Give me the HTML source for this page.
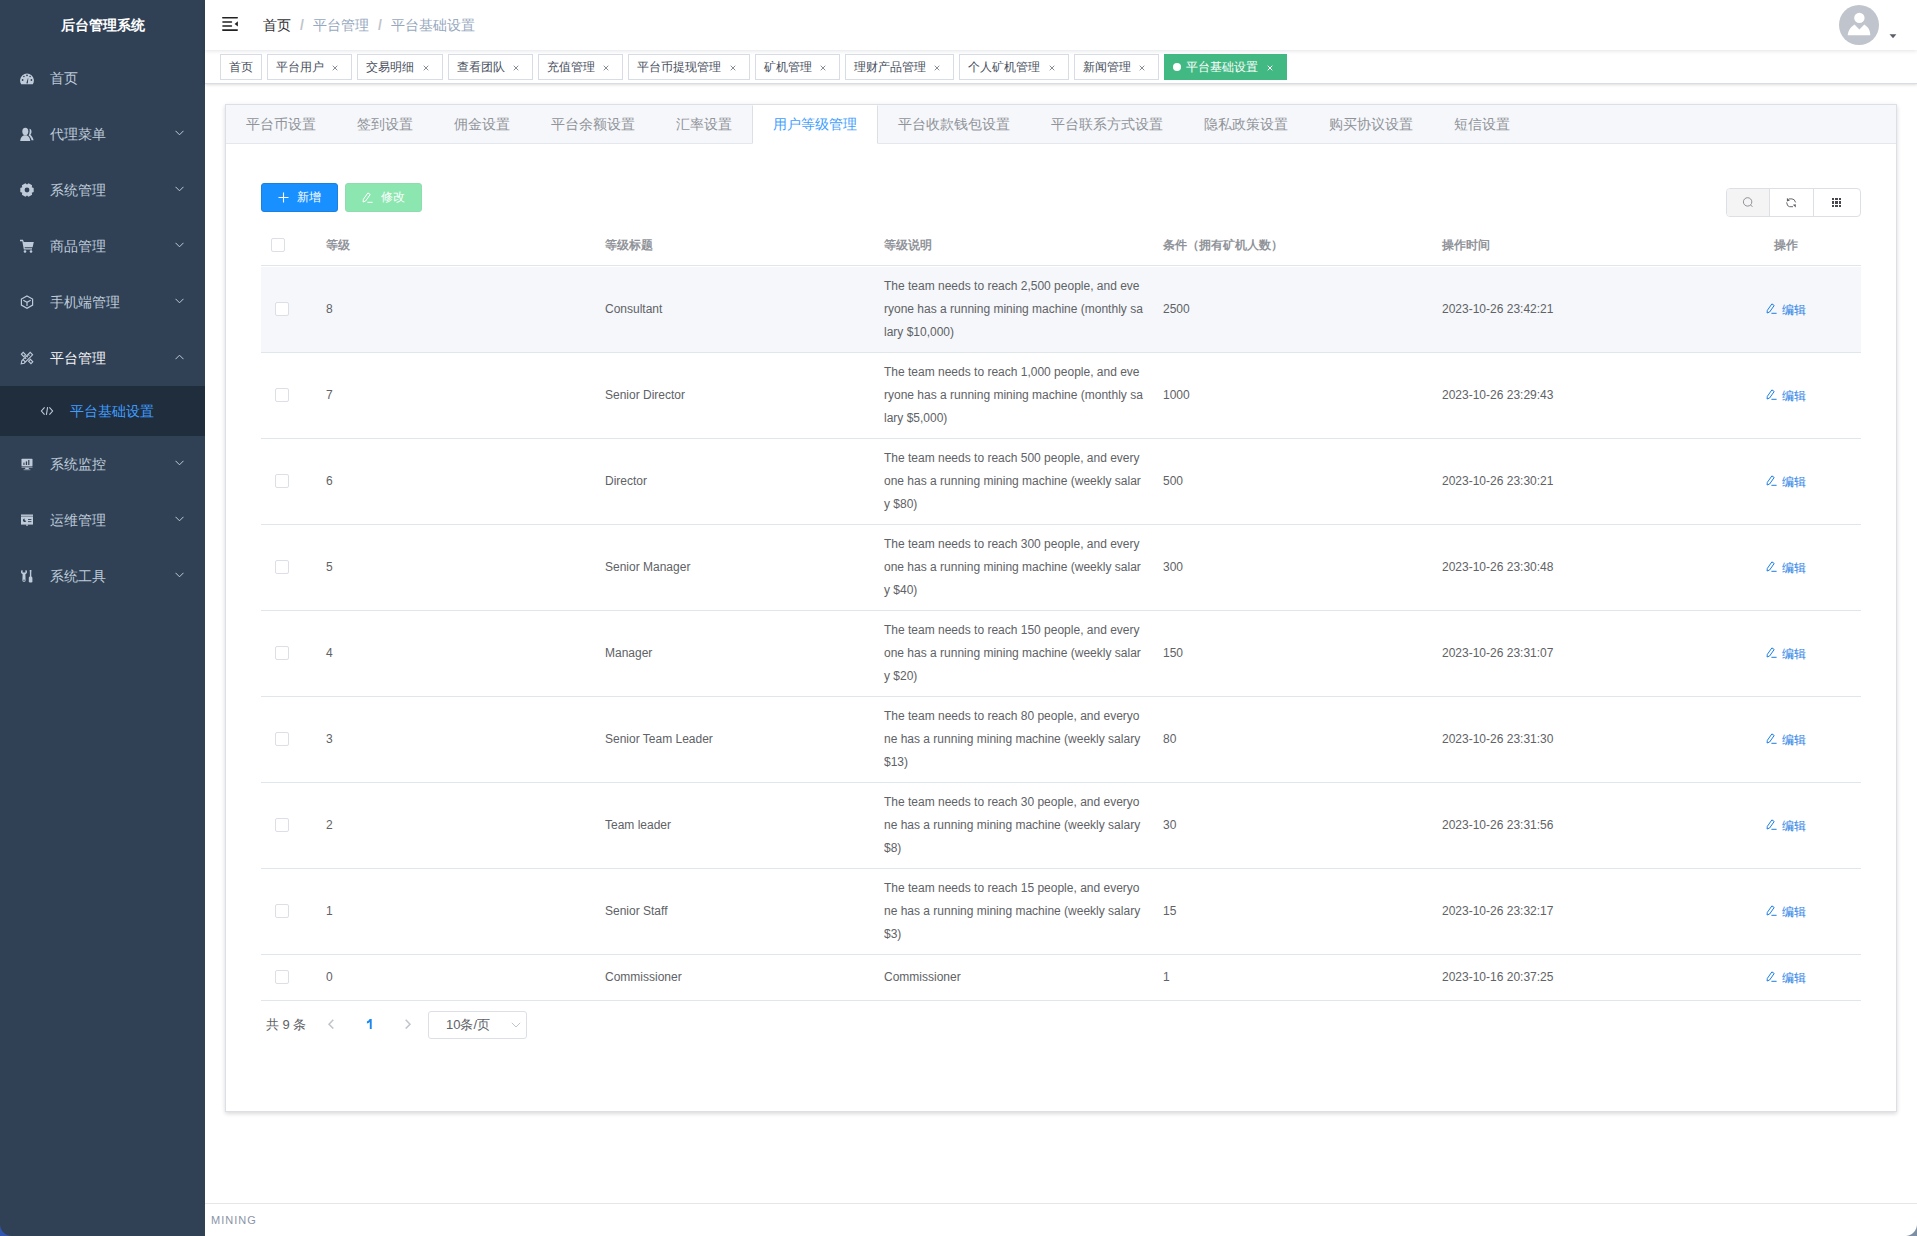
<!DOCTYPE html>
<html><head><meta charset="utf-8">
<style>
*{box-sizing:border-box;margin:0;padding:0}
html,body{width:1917px;height:1236px;overflow:hidden;background:#fff;font-family:"Liberation Sans",sans-serif;-webkit-font-smoothing:antialiased}
.abs{position:absolute}
#sidebar{position:absolute;left:0;top:0;width:205px;height:1236px;background:#304156}
#logo{position:absolute;left:0;top:0;width:205px;height:50px;line-height:50px;text-align:center;color:#fff;font-weight:bold;font-size:14px}
.mi{position:absolute;left:0;width:205px;height:56px;line-height:56px;color:#bfcbd9;font-size:14px}
.mi .ic{position:absolute;left:20px;top:21px;width:14px;height:14px}
.mi .tx{position:absolute;left:50px;top:0}
.mi .ch{position:absolute;left:175px;top:24px;width:9px;height:6px}
#navbar{position:absolute;z-index:3;left:205px;top:0;width:1712px;height:50px;background:#fff;box-shadow:0 1px 4px rgba(0,21,41,.12)}
#tags{position:absolute;left:205px;top:50px;width:1712px;height:34px;background:#fff;border-bottom:1px solid #d8dce5;box-shadow:0 1px 3px 0 rgba(0,0,0,.12),0 0 3px 0 rgba(0,0,0,.04)}
.tag{position:absolute;top:4px;height:26px;line-height:24px;border:1px solid #d8dce5;color:#495060;background:#fff;font-size:12px;padding:0 8px;white-space:nowrap}
.tag .x{position:absolute;right:8px;top:5px;width:16px;height:16px}
.tag.act{background:#42b983;border-color:#42b983;color:#fff}
.tag .dot{display:inline-block;width:8px;height:8px;border-radius:50%;background:#fff;margin-right:5.33px;vertical-align:0}
#card{position:absolute;left:225px;top:104px;width:1672px;height:1008px;background:#fff;border:1px solid #dcdfe6;box-shadow:0 2px 4px 0 rgba(0,0,0,.12),0 0 6px 0 rgba(0,0,0,.04)}
#tabhead{position:absolute;left:0;top:0;width:1670px;height:39px;background:#f5f7fa;border-bottom:1px solid #e4e7ed}
.tab{position:absolute;top:0;height:39px;line-height:37px;font-size:14px;color:#909399;padding:0 20px;border:1px solid transparent;white-space:nowrap}
.tab.act{color:#409eff;background:#fff;border-left-color:#dcdfe6;border-right-color:#dcdfe6}
.btn{position:absolute;height:29px;border:1px solid;border-radius:3px;color:#fff;font-size:12px;line-height:27px}
.cb{position:absolute;width:14px;height:14px;border:1px solid #dcdfe6;border-radius:2px;background:#fff}
.row{position:absolute;width:1600px;border-bottom:1px solid #dfe6ec;font-size:12px;color:#606266;line-height:23px}
.edit{color:#1c7ee6;width:60px;height:28px;line-height:28px}
#footer{position:absolute;left:205px;top:1203px;width:1712px;height:33px;border-top:1px solid #e6e6e6;background:#fff}
</style></head><body>
<div id="sidebar">
  <div id="logo">后台管理系统</div>
<div class="mi" style="top:50px"><svg class="ic" viewBox="0 0 14 14"><path d="M1.2 13.2 A6.9 6.9 0 1 1 12.8 13.2 Z" fill="#bfcbd9"/><circle cx="7" cy="4.3" r="0.9" fill="#304156"/><circle cx="3.9" cy="5.5" r="0.8" fill="#304156"/><circle cx="10.1" cy="5.5" r="0.8" fill="#304156"/><circle cx="2.6" cy="9" r="0.9" fill="#304156"/><circle cx="11.4" cy="9" r="0.9" fill="#304156"/><path d="M6.3 12.3 L7.9 7.2 L8.3 7.3 L7.8 12.5 Z" fill="#304156"/></svg><span class="tx">首页</span></div>
<div class="mi" style="top:106px"><svg class="ic" viewBox="0 0 14 14"><path d="M9.5 1.8 C11.8 2.3 12.3 5.7 10.4 7.8 C11.8 9 12.8 10.5 13.6 13.2 L11.6 13.2 C11 11 10 9.4 8.6 8.4 C9.8 6.6 9.9 3.4 9.5 1.8Z" fill="#bfcbd9"/><ellipse cx="5.3" cy="4.4" rx="3" ry="3.6" fill="#bfcbd9"/><path d="M0.2 14 C0.4 10.5 2.3 8.8 4 8.2 L6.6 8.2 C8.3 8.8 10 10.5 10.3 14 Z" fill="#bfcbd9"/></svg><span class="tx">代理菜单</span><svg class="ch" viewBox="0 0 9 6"><path d="M0.5 0.8 L4.5 4.8 L8.5 0.8" fill="none" stroke="#bfcbd9" stroke-width="1"/></svg></div>
<div class="mi" style="top:162px"><svg class="ic" viewBox="0 0 14 14"><path d="M11.76 4.25 L13.69 4.95 L13.69 9.05 L11.76 9.75 L12.12 11.77 L8.57 13.82 L7.00 12.50 L5.43 13.82 L1.88 11.77 L2.24 9.75 L0.31 9.05 L0.31 4.95 L2.24 4.25 L1.88 2.23 L5.43 0.18 L7.00 1.50 L8.57 0.18 L12.12 2.23 Z" fill="#bfcbd9"/><circle cx="7" cy="7" r="2.4" fill="#304156"/></svg><span class="tx">系统管理</span><svg class="ch" viewBox="0 0 9 6"><path d="M0.5 0.8 L4.5 4.8 L8.5 0.8" fill="none" stroke="#bfcbd9" stroke-width="1"/></svg></div>
<div class="mi" style="top:218px"><svg class="ic" viewBox="0 0 14 14"><path d="M0 0.8 L3 0.8 L3.8 3 L13.8 3 L12.6 8.2 L4.6 8.2 L4.8 9.2 L12 9.2 L12 10.4 L3.8 10.4 L2.3 2.2 L0 2.2 Z" fill="#bfcbd9"/><circle cx="5" cy="12.5" r="1.3" fill="#bfcbd9"/><circle cx="11" cy="12.5" r="1.3" fill="#bfcbd9"/></svg><span class="tx">商品管理</span><svg class="ch" viewBox="0 0 9 6"><path d="M0.5 0.8 L4.5 4.8 L8.5 0.8" fill="none" stroke="#bfcbd9" stroke-width="1"/></svg></div>
<div class="mi" style="top:274px"><svg class="ic" viewBox="0 0 14 14"><path d="M7 0.9 L12.6 4.1 L12.6 10.1 L7 13.3 L1.4 10.1 L1.4 4.1 Z" fill="none" stroke="#bfcbd9" stroke-width="1.2"/><path d="M3.3 5.2 L7 7.3 L10.7 5.2 M7 7.3 L7 11" fill="none" stroke="#bfcbd9" stroke-width="1.2"/></svg><span class="tx">手机端管理</span><svg class="ch" viewBox="0 0 9 6"><path d="M0.5 0.8 L4.5 4.8 L8.5 0.8" fill="none" stroke="#bfcbd9" stroke-width="1"/></svg></div>
<div class="mi" style="top:330px"><svg class="ic" viewBox="0 0 14 14"><g fill="none" stroke="#bfcbd9" stroke-width="1.1"><path d="M1.2 12.8 L1.8 9.8 L10.2 1.4 L12.6 3.8 L4.2 12.2 Z"/><path d="M3 8.6 L5.4 11 M5 6.6 L6.2 7.8 M6.6 5 L7.8 6.2 M8.2 3.4 L9.4 4.6"/><path d="M1.4 3.2 L3.2 1.4 L5.6 3.8 L3.8 5.6 Z M8.6 10.2 L10.4 8.4 L12.8 10.8 L11 12.6 Z"/></g></svg><span class="tx" style="color:#f4f4f5">平台管理</span><svg class="ch" viewBox="0 0 9 6"><path d="M0.5 5.2 L4.5 1.2 L8.5 5.2" fill="none" stroke="#bfcbd9" stroke-width="1"/></svg></div>
<div class="mi" style="top:386px;height:50px;line-height:50px;background:#1f2d3d"><svg class="ic" style="left:40px;top:18px" viewBox="0 0 14 14"><path d="M4.6 3.4 L1.4 7 L4.6 10.6 M9.4 3.4 L12.6 7 L9.4 10.6 M7.6 3.2 L6.4 10.8" fill="none" stroke="#bfcbd9" stroke-width="1.1"/></svg><span class="tx" style="left:70px;color:#409eff">平台基础设置</span></div>
<div class="mi" style="top:436px"><svg class="ic" viewBox="0 0 14 14"><rect x="1.5" y="1.8" width="11" height="7.4" rx="0.6" fill="#bfcbd9"/><rect x="1.5" y="9.6" width="11" height="1.2" fill="#8f9bab"/><rect x="5.2" y="10.8" width="3.6" height="1.6" fill="#bfcbd9"/><rect x="3.6" y="12.3" width="6.8" height="0.9" fill="#8f9bab"/><rect x="3.4" y="5.6" width="1.1" height="2.4" fill="#304156"/><rect x="5.8" y="4.4" width="1.3" height="3.6" fill="#304156"/><rect x="8.2" y="3" width="1.2" height="5" fill="#304156"/></svg><span class="tx">系统监控</span><svg class="ch" viewBox="0 0 9 6"><path d="M0.5 0.8 L4.5 4.8 L8.5 0.8" fill="none" stroke="#bfcbd9" stroke-width="1"/></svg></div>
<div class="mi" style="top:492px"><svg class="ic" viewBox="0 0 14 14"><rect x="1" y="1.5" width="12" height="1.4" fill="#bfcbd9"/><rect x="1" y="3.4" width="12" height="8.2" fill="#bfcbd9"/><rect x="6.2" y="11.4" width="1.6" height="1.4" fill="#bfcbd9"/><path d="M4.6 5.4 A1.8 1.8 0 1 0 6.3 8 L4.6 7.2 Z" fill="#304156"/><rect x="8" y="6" width="3.4" height="0.9" fill="#304156"/><rect x="8" y="8.2" width="3.4" height="0.9" fill="#304156"/></svg><span class="tx">运维管理</span><svg class="ch" viewBox="0 0 9 6"><path d="M0.5 0.8 L4.5 4.8 L8.5 0.8" fill="none" stroke="#bfcbd9" stroke-width="1"/></svg></div>
<div class="mi" style="top:548px"><svg class="ic" viewBox="0 0 14 14"><path d="M1.4 1.2 C0.6 3 1 4.6 2.6 5.2 L2.4 11.2 C2.4 13.4 5.6 13.4 5.6 11.2 L5.4 5.2 C7 4.6 7.4 3 6.6 1.2 L5.4 1.2 L5.4 3.4 L2.6 3.4 L2.6 1.2 Z" fill="#bfcbd9"/><circle cx="4" cy="11.2" r="0.7" fill="#304156"/><path d="M10.2 0.9 C9.5 1 9.4 2 9.9 2.6 L9.9 7.6 C9 8 8.8 8.6 8.8 9.5 L8.8 12.6 C8.8 13.2 9.2 13.4 9.6 13.4 L11.6 13.4 C12 13.4 12.4 13.2 12.4 12.6 L12.4 9.5 C12.4 8.6 12.2 8 11.3 7.6 L11.3 2.6 C11.8 2 11.7 1 11 0.9 Z" fill="#bfcbd9"/></svg><span class="tx">系统工具</span><svg class="ch" viewBox="0 0 9 6"><path d="M0.5 0.8 L4.5 4.8 L8.5 0.8" fill="none" stroke="#bfcbd9" stroke-width="1"/></svg></div>
</div>
<div id="navbar">
  <svg class="abs" style="left:17px;top:10px" width="20" height="30" viewBox="0 0 20 30"><g fill="#222"><rect x="0" y="7" width="16" height="1.6" rx="0.8"/><rect x="0.2" y="11.2" width="10" height="1.5" rx="0.7"/><rect x="0.2" y="15.2" width="10" height="1.5" rx="0.7"/><rect x="0" y="19.3" width="16" height="1.6" rx="0.8"/><path d="M15.9 11.3 L15.9 16.6 L12.6 14 Z"/></g></svg>
  <div class="abs" style="left:58px;top:0;height:50px;line-height:50px;font-size:14px;white-space:nowrap"><span style="color:#303133">首页</span><span style="color:#c0c4cc;font-weight:bold;margin:0 9px">/</span><span style="color:#97a8be">平台管理</span><span style="color:#c0c4cc;font-weight:bold;margin:0 9px">/</span><span style="color:#97a8be">平台基础设置</span></div>
  <svg class="abs" style="left:1634px;top:5px" width="40" height="40" viewBox="0 0 40 40"><circle cx="20" cy="20" r="20" fill="#c0c4cc"/><circle cx="20.4" cy="12.9" r="5.2" fill="#fff"/><path d="M8.7 30.3 C9.2 25 12 21.6 15.5 19.4 L20.4 24.6 L25.3 19.4 C28.8 21.6 31.4 25 31.3 30.3 Z" fill="#fff"/></svg>
  <svg class="abs" style="left:1684px;top:34px" width="8" height="5" viewBox="0 0 8 5"><path d="M0.5 0.2 L7.4 0.2 L4 4.2 Z" fill="#5a5e66"/></svg>
</div>
<div id="tags">
<div class="tag" style="left:15.00px;width:42.00px">首页</div>
<div class="tag" style="left:62.00px;width:85.33px">平台用户<svg class="x" width="16" height="16" viewBox="0 0 16 16"><path d="M5.7 5.7 L10.3 10.3 M10.3 5.7 L5.7 10.3" stroke="#7a808c" stroke-width="0.9"/></svg></div>
<div class="tag" style="left:152.33px;width:85.33px">交易明细<svg class="x" width="16" height="16" viewBox="0 0 16 16"><path d="M5.7 5.7 L10.3 10.3 M10.3 5.7 L5.7 10.3" stroke="#7a808c" stroke-width="0.9"/></svg></div>
<div class="tag" style="left:242.66px;width:85.33px">查看团队<svg class="x" width="16" height="16" viewBox="0 0 16 16"><path d="M5.7 5.7 L10.3 10.3 M10.3 5.7 L5.7 10.3" stroke="#7a808c" stroke-width="0.9"/></svg></div>
<div class="tag" style="left:332.99px;width:85.33px">充值管理<svg class="x" width="16" height="16" viewBox="0 0 16 16"><path d="M5.7 5.7 L10.3 10.3 M10.3 5.7 L5.7 10.3" stroke="#7a808c" stroke-width="0.9"/></svg></div>
<div class="tag" style="left:423.32px;width:121.33px">平台币提现管理<svg class="x" width="16" height="16" viewBox="0 0 16 16"><path d="M5.7 5.7 L10.3 10.3 M10.3 5.7 L5.7 10.3" stroke="#7a808c" stroke-width="0.9"/></svg></div>
<div class="tag" style="left:549.65px;width:85.33px">矿机管理<svg class="x" width="16" height="16" viewBox="0 0 16 16"><path d="M5.7 5.7 L10.3 10.3 M10.3 5.7 L5.7 10.3" stroke="#7a808c" stroke-width="0.9"/></svg></div>
<div class="tag" style="left:639.98px;width:109.33px">理财产品管理<svg class="x" width="16" height="16" viewBox="0 0 16 16"><path d="M5.7 5.7 L10.3 10.3 M10.3 5.7 L5.7 10.3" stroke="#7a808c" stroke-width="0.9"/></svg></div>
<div class="tag" style="left:754.31px;width:109.33px">个人矿机管理<svg class="x" width="16" height="16" viewBox="0 0 16 16"><path d="M5.7 5.7 L10.3 10.3 M10.3 5.7 L5.7 10.3" stroke="#7a808c" stroke-width="0.9"/></svg></div>
<div class="tag" style="left:868.64px;width:85.33px">新闻管理<svg class="x" width="16" height="16" viewBox="0 0 16 16"><path d="M5.7 5.7 L10.3 10.3 M10.3 5.7 L5.7 10.3" stroke="#7a808c" stroke-width="0.9"/></svg></div>
<div class="tag act" style="left:958.97px;width:122.66px"><i class="dot"></i>平台基础设置<svg class="x" width="16" height="16" viewBox="0 0 16 16"><path d="M5.7 5.7 L10.3 10.3 M10.3 5.7 L5.7 10.3" stroke="#fff" stroke-width="1"/></svg></div>
</div>
<div id="card">
  <div id="tabhead">
<div class="tab" style="left:-1px;width:112px">平台币设置</div>
<div class="tab" style="left:110px;width:98px">签到设置</div>
<div class="tab" style="left:207px;width:98px">佣金设置</div>
<div class="tab" style="left:304px;width:126px">平台余额设置</div>
<div class="tab" style="left:429px;width:98px">汇率设置</div>
<div class="tab act" style="left:526px;width:126px">用户等级管理</div>
<div class="tab" style="left:651px;width:154px">平台收款钱包设置</div>
<div class="tab" style="left:804px;width:154px">平台联系方式设置</div>
<div class="tab" style="left:957px;width:126px">隐私政策设置</div>
<div class="tab" style="left:1082px;width:126px">购买协议设置</div>
<div class="tab" style="left:1207px;width:98px">短信设置</div>
</div>
<div class="btn" style="left:35px;top:78px;width:77px;background:#1890ff;border-color:#1d80dd"><svg class="abs" style="left:16px;top:8px" width="11" height="11" viewBox="0 0 11 11"><path d="M5.5 0.5 V10.5 M0.5 5.5 H10.5" stroke="#fff" stroke-width="1.1"/></svg><span class="abs" style="left:35px;top:0">新增</span></div>
<div class="btn" style="left:119px;top:78px;width:77px;background:#8ce6b0;border-color:#90dcb0"><svg class="abs" style="left:16px;top:8px" width="11" height="11" viewBox="0 0 11 11"><path d="M1.1 10 L1.3 7.4 L5.9 0.9 L8.2 2.5 L3.6 9 Z" fill="none" stroke="#fff" stroke-width="1"/><path d="M5.4 10.3 H10.6" stroke="#fff" stroke-width="1"/></svg><span class="abs" style="left:35px;top:0">修改</span></div>
<div class="abs" style="left:1500px;top:83px;width:135px;height:29px;border:1px solid #dcdfe6;border-radius:4px;overflow:hidden">
<div class="abs" style="left:0;top:0;width:43px;height:27px;background:#f4f4f5;border-right:1px solid #dcdfe6"></div>
<div class="abs" style="left:86px;top:0;width:1px;height:27px;background:#dcdfe6"></div>
<svg class="abs" style="left:15px;top:8px" width="12" height="12" viewBox="0 0 12 12"><circle cx="5.6" cy="4.9" r="4.2" fill="none" stroke="#8a8c92" stroke-width="0.95"/><path d="M8.6 8 L10.4 9.8" stroke="#8a8c92" stroke-width="1"/></svg>
<svg class="abs" style="left:59px;top:9px" width="11" height="10" viewBox="0 0 11 10"><g fill="none" stroke="#5f6166" stroke-width="0.95"><path d="M2.8 0.9 H6 Q8.6 0.9 9.6 4.4"/><path d="M0.6 4.4 Q1.2 8.7 3.6 8.7 H7"/></g><path d="M0.9 -0.1 L0.9 3.4 L3.9 2.6 Z M9.8 9.6 L9.8 6.3 L6.8 6.8 Z" fill="#5f6166"/></svg>
<svg class="abs" style="left:105px;top:9px" width="9" height="9" viewBox="0 0 9 9"><g fill="#46484e"><rect x="0" y="0" width="2" height="2"/><rect x="3" y="0" width="3" height="2"/><rect x="7" y="0" width="2" height="2"/><rect x="0" y="3" width="2" height="3"/><rect x="3" y="3" width="3" height="3"/><rect x="7" y="3" width="2" height="3"/><rect x="0" y="7" width="2" height="2"/><rect x="3" y="7" width="3" height="2"/><rect x="7" y="7" width="2" height="2"/></g></svg>
</div>
<div class="abs" style="left:35px;top:121px;width:1600px;height:40px;border-bottom:1px solid #dfe6ec;font-size:12px;font-weight:bold;color:#909399;line-height:39px"><span class="cb" style="left:10px;top:12px"></span><span class="abs" style="left:65px">等级</span><span class="abs" style="left:344px">等级标题</span><span class="abs" style="left:623px">等级说明</span><span class="abs" style="left:902px">条件（拥有矿机人数）</span><span class="abs" style="left:1181px">操作时间</span><span class="abs" style="left:1513px">操作</span></div>
<div class="row" style="left:35px;top:162px;height:86px;background:#f5f7fa"><span class="cb" style="left:14px;top:35px"></span><span class="abs" style="left:65px;top:31.0px">8</span><span class="abs" style="left:344px;top:31.0px">Consultant</span><span class="abs" style="left:623px;top:8.0px">The team needs to reach 2,500 people, and eve<br>ryone has a running mining machine (monthly sa<br>lary $10,000)</span><span class="abs" style="left:902px;top:31.0px">2500</span><span class="abs" style="left:1181px;top:31.0px">2023-10-26 23:42:21</span><span class="abs edit" style="left:1505px;top:28.5px"><svg class="abs" style="left:0;top:7px" width="11" height="11" viewBox="0 0 11 11"><path d="M1.1 10 L1.3 7.4 L5.9 0.9 L8.2 2.5 L3.6 9 Z" fill="none" stroke="#1c7ee6" stroke-width="1"/><path d="M5.4 10.3 H10.6" stroke="#1c7ee6" stroke-width="1"/></svg><span class="abs" style="left:16px;top:0">编辑</span></span></div>
<div class="row" style="left:35px;top:248px;height:86px;background:#fff"><span class="cb" style="left:14px;top:35px"></span><span class="abs" style="left:65px;top:31.0px">7</span><span class="abs" style="left:344px;top:31.0px">Senior Director</span><span class="abs" style="left:623px;top:8.0px">The team needs to reach 1,000 people, and eve<br>ryone has a running mining machine (monthly sa<br>lary $5,000)</span><span class="abs" style="left:902px;top:31.0px">1000</span><span class="abs" style="left:1181px;top:31.0px">2023-10-26 23:29:43</span><span class="abs edit" style="left:1505px;top:28.5px"><svg class="abs" style="left:0;top:7px" width="11" height="11" viewBox="0 0 11 11"><path d="M1.1 10 L1.3 7.4 L5.9 0.9 L8.2 2.5 L3.6 9 Z" fill="none" stroke="#1c7ee6" stroke-width="1"/><path d="M5.4 10.3 H10.6" stroke="#1c7ee6" stroke-width="1"/></svg><span class="abs" style="left:16px;top:0">编辑</span></span></div>
<div class="row" style="left:35px;top:334px;height:86px;background:#fff"><span class="cb" style="left:14px;top:35px"></span><span class="abs" style="left:65px;top:31.0px">6</span><span class="abs" style="left:344px;top:31.0px">Director</span><span class="abs" style="left:623px;top:8.0px">The team needs to reach 500 people, and every<br>one has a running mining machine (weekly salar<br>y $80)</span><span class="abs" style="left:902px;top:31.0px">500</span><span class="abs" style="left:1181px;top:31.0px">2023-10-26 23:30:21</span><span class="abs edit" style="left:1505px;top:28.5px"><svg class="abs" style="left:0;top:7px" width="11" height="11" viewBox="0 0 11 11"><path d="M1.1 10 L1.3 7.4 L5.9 0.9 L8.2 2.5 L3.6 9 Z" fill="none" stroke="#1c7ee6" stroke-width="1"/><path d="M5.4 10.3 H10.6" stroke="#1c7ee6" stroke-width="1"/></svg><span class="abs" style="left:16px;top:0">编辑</span></span></div>
<div class="row" style="left:35px;top:420px;height:86px;background:#fff"><span class="cb" style="left:14px;top:35px"></span><span class="abs" style="left:65px;top:31.0px">5</span><span class="abs" style="left:344px;top:31.0px">Senior Manager</span><span class="abs" style="left:623px;top:8.0px">The team needs to reach 300 people, and every<br>one has a running mining machine (weekly salar<br>y $40)</span><span class="abs" style="left:902px;top:31.0px">300</span><span class="abs" style="left:1181px;top:31.0px">2023-10-26 23:30:48</span><span class="abs edit" style="left:1505px;top:28.5px"><svg class="abs" style="left:0;top:7px" width="11" height="11" viewBox="0 0 11 11"><path d="M1.1 10 L1.3 7.4 L5.9 0.9 L8.2 2.5 L3.6 9 Z" fill="none" stroke="#1c7ee6" stroke-width="1"/><path d="M5.4 10.3 H10.6" stroke="#1c7ee6" stroke-width="1"/></svg><span class="abs" style="left:16px;top:0">编辑</span></span></div>
<div class="row" style="left:35px;top:506px;height:86px;background:#fff"><span class="cb" style="left:14px;top:35px"></span><span class="abs" style="left:65px;top:31.0px">4</span><span class="abs" style="left:344px;top:31.0px">Manager</span><span class="abs" style="left:623px;top:8.0px">The team needs to reach 150 people, and every<br>one has a running mining machine (weekly salar<br>y $20)</span><span class="abs" style="left:902px;top:31.0px">150</span><span class="abs" style="left:1181px;top:31.0px">2023-10-26 23:31:07</span><span class="abs edit" style="left:1505px;top:28.5px"><svg class="abs" style="left:0;top:7px" width="11" height="11" viewBox="0 0 11 11"><path d="M1.1 10 L1.3 7.4 L5.9 0.9 L8.2 2.5 L3.6 9 Z" fill="none" stroke="#1c7ee6" stroke-width="1"/><path d="M5.4 10.3 H10.6" stroke="#1c7ee6" stroke-width="1"/></svg><span class="abs" style="left:16px;top:0">编辑</span></span></div>
<div class="row" style="left:35px;top:592px;height:86px;background:#fff"><span class="cb" style="left:14px;top:35px"></span><span class="abs" style="left:65px;top:31.0px">3</span><span class="abs" style="left:344px;top:31.0px">Senior Team Leader</span><span class="abs" style="left:623px;top:8.0px">The team needs to reach 80 people, and everyo<br>ne has a running mining machine (weekly salary<br>$13)</span><span class="abs" style="left:902px;top:31.0px">80</span><span class="abs" style="left:1181px;top:31.0px">2023-10-26 23:31:30</span><span class="abs edit" style="left:1505px;top:28.5px"><svg class="abs" style="left:0;top:7px" width="11" height="11" viewBox="0 0 11 11"><path d="M1.1 10 L1.3 7.4 L5.9 0.9 L8.2 2.5 L3.6 9 Z" fill="none" stroke="#1c7ee6" stroke-width="1"/><path d="M5.4 10.3 H10.6" stroke="#1c7ee6" stroke-width="1"/></svg><span class="abs" style="left:16px;top:0">编辑</span></span></div>
<div class="row" style="left:35px;top:678px;height:86px;background:#fff"><span class="cb" style="left:14px;top:35px"></span><span class="abs" style="left:65px;top:31.0px">2</span><span class="abs" style="left:344px;top:31.0px">Team leader</span><span class="abs" style="left:623px;top:8.0px">The team needs to reach 30 people, and everyo<br>ne has a running mining machine (weekly salary<br>$8)</span><span class="abs" style="left:902px;top:31.0px">30</span><span class="abs" style="left:1181px;top:31.0px">2023-10-26 23:31:56</span><span class="abs edit" style="left:1505px;top:28.5px"><svg class="abs" style="left:0;top:7px" width="11" height="11" viewBox="0 0 11 11"><path d="M1.1 10 L1.3 7.4 L5.9 0.9 L8.2 2.5 L3.6 9 Z" fill="none" stroke="#1c7ee6" stroke-width="1"/><path d="M5.4 10.3 H10.6" stroke="#1c7ee6" stroke-width="1"/></svg><span class="abs" style="left:16px;top:0">编辑</span></span></div>
<div class="row" style="left:35px;top:764px;height:86px;background:#fff"><span class="cb" style="left:14px;top:35px"></span><span class="abs" style="left:65px;top:31.0px">1</span><span class="abs" style="left:344px;top:31.0px">Senior Staff</span><span class="abs" style="left:623px;top:8.0px">The team needs to reach 15 people, and everyo<br>ne has a running mining machine (weekly salary<br>$3)</span><span class="abs" style="left:902px;top:31.0px">15</span><span class="abs" style="left:1181px;top:31.0px">2023-10-26 23:32:17</span><span class="abs edit" style="left:1505px;top:28.5px"><svg class="abs" style="left:0;top:7px" width="11" height="11" viewBox="0 0 11 11"><path d="M1.1 10 L1.3 7.4 L5.9 0.9 L8.2 2.5 L3.6 9 Z" fill="none" stroke="#1c7ee6" stroke-width="1"/><path d="M5.4 10.3 H10.6" stroke="#1c7ee6" stroke-width="1"/></svg><span class="abs" style="left:16px;top:0">编辑</span></span></div>
<div class="row" style="left:35px;top:850px;height:46px;background:#fff"><span class="cb" style="left:14px;top:15px"></span><span class="abs" style="left:65px;top:11.0px">0</span><span class="abs" style="left:344px;top:11.0px">Commissioner</span><span class="abs" style="left:623px;top:11.0px">Commissioner</span><span class="abs" style="left:902px;top:11.0px">1</span><span class="abs" style="left:1181px;top:11.0px">2023-10-16 20:37:25</span><span class="abs edit" style="left:1505px;top:8.5px"><svg class="abs" style="left:0;top:7px" width="11" height="11" viewBox="0 0 11 11"><path d="M1.1 10 L1.3 7.4 L5.9 0.9 L8.2 2.5 L3.6 9 Z" fill="none" stroke="#1c7ee6" stroke-width="1"/><path d="M5.4 10.3 H10.6" stroke="#1c7ee6" stroke-width="1"/></svg><span class="abs" style="left:16px;top:0">编辑</span></span></div>
<div class="abs" style="left:40px;top:906px;font-size:13px;color:#606266;line-height:28px;white-space:nowrap">共 9 条</div>
<svg class="abs" style="left:101px;top:914px" width="8" height="10" viewBox="0 0 8 10"><path d="M6.3 0.8 L2 5.2 L6.3 9.6" fill="none" stroke="#c0c4cc" stroke-width="1.5"/></svg>
<svg class="abs" style="left:140px;top:913px" width="10" height="12" viewBox="0 0 10 12"><path d="M3.7 1 H5.7 V11 H3.8 V3.9 Q2.7 4.9 0.9 5.4 V3.6 Q2.8 2.9 3.7 1 Z" fill="#1a88f0"/></svg>
<svg class="abs" style="left:178px;top:914px" width="8" height="10" viewBox="0 0 8 10"><path d="M1.7 0.8 L6 5.2 L1.7 9.6" fill="none" stroke="#c0c4cc" stroke-width="1.5"/></svg>
<div class="abs" style="left:202px;top:906px;width:99px;height:28px;border:1px solid #dcdfe6;border-radius:3px;font-size:13px;color:#606266;line-height:26px"><span class="abs" style="left:17px">10条/页</span><svg class="abs" style="left:82px;top:10px" width="10" height="6" viewBox="0 0 10 6"><path d="M0.8 0.8 L5 5 L9.2 0.8" fill="none" stroke="#c0c4cc" stroke-width="1"/></svg></div>
</div>
<div id="footer"><span style="position:absolute;left:6px;top:10px;font-size:11px;letter-spacing:1px;color:#8a94a6">MINING</span></div>
<div class="abs" style="z-index:9;left:1905px;top:1224px;width:12px;height:12px;background:radial-gradient(circle at 0 0, rgba(255,255,255,0) 11.5px, #7d8fa5 12.5px)"></div>
<div class="abs" style="z-index:9;left:0;top:1224px;width:12px;height:12px;background:radial-gradient(circle at 12px 0, rgba(48,65,86,0) 11.5px, #2f55b0 12.5px)"></div>
</body></html>
